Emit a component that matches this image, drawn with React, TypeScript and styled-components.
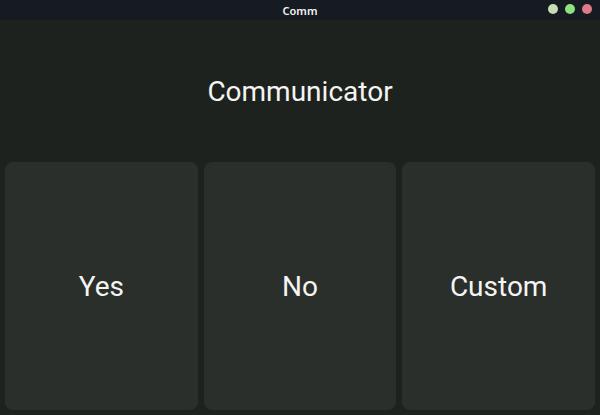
import styled, { createGlobalStyle } from "styled-components";

const GlobalStyle = createGlobalStyle`
  html, body {
    margin: 0;
    padding: 0;
    background: #1e221e;
  }
  #root {
    width: 600px;
    height: 415px;
  }
`;

type Choice = { label: string };

const choices: Choice[] = [{ label: "Yes" }, { label: "No" }, { label: "Custom" }];

const App = () => {
  return (
    <>
      <GlobalStyle />
      <Window>
        <TitleBar>
          <WindowTitle>Comm</WindowTitle>
          <Controls>
            <Dot color="#c5dcb5" />
            <Dot color="#8fe07e" />
            <Dot color="#df7a88" />
          </Controls>
        </TitleBar>
        <Content>
          <Header>Communicator</Header>
          <Grid>
            {choices.map((c) => (
              <Card key={c.label}>{c.label}</Card>
            ))}
          </Grid>
        </Content>
      </Window>
    </>
  );
};
export default App;

const Window = styled.div`
  width: 600px;
  height: 415px;
  display: flex;
  flex-direction: column;
  background: #1e221e;
  font-family: Roboto, "Noto Sans", sans-serif;
  overflow: hidden;
`;

const TitleBar = styled.div`
  height: 20px;
  flex: none;
  display: flex;
  align-items: center;
  justify-content: center;
  position: relative;
  background: #161a21;
`;

const WindowTitle = styled.span`
  font-family: "Noto Sans", sans-serif;
  font-size: 11px;
  font-weight: 600;
  color: #f2f2f2;
`;

const Controls = styled.div`
  position: absolute;
  right: 8px;
  top: 4px;
  display: flex;
  gap: 7px;
`;

const Dot = styled.span<{ color: string }>`
  width: 10px;
  height: 10px;
  border-radius: 50%;
  background: ${({ color }) => color};
`;

const Content = styled.div`
  flex: 1;
  display: flex;
  flex-direction: column;
  padding: 0 5px 5px;
`;

const Header = styled.div`
  height: 142px;
  flex: none;
  display: flex;
  align-items: center;
  justify-content: center;
  font-size: 28px;
  color: #f4f5f2;
`;

const Grid = styled.div`
  flex: 1;
  display: grid;
  grid-template-columns: repeat(3, 1fr);
  gap: 6px;
`;

const Card = styled.div`
  display: flex;
  align-items: center;
  justify-content: center;
  background: #2b2f2b;
  border-radius: 8px;
  font-size: 28px;
  color: #f4f5f2;
`;
